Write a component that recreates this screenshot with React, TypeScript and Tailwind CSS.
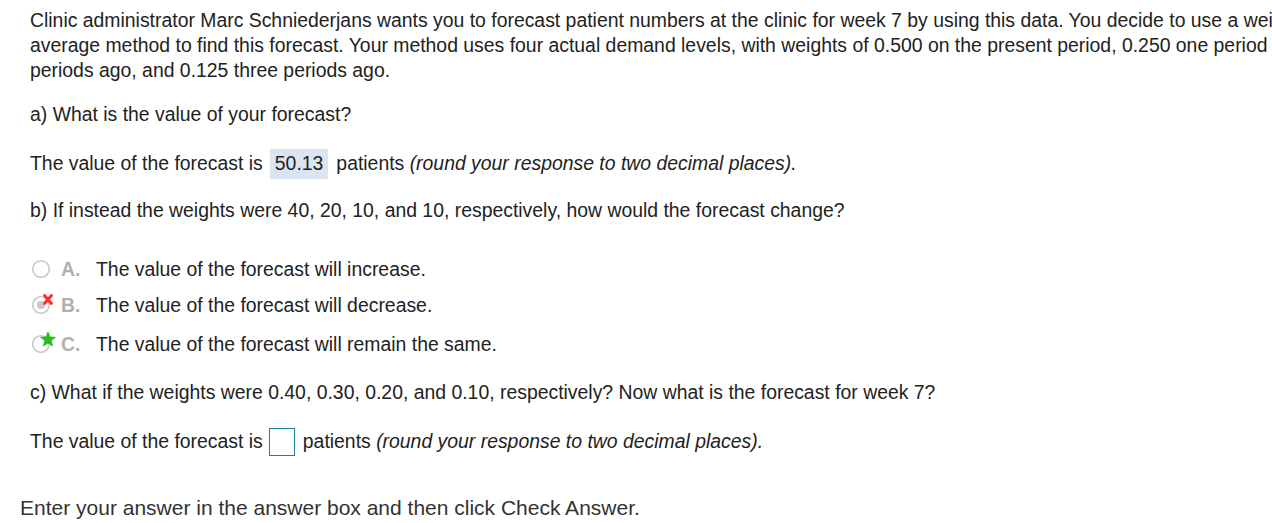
import React from "react";

const Radio = ({ mark }: { mark?: "x" | "star" }) => (
  <svg width="30" height="24" viewBox="0 0 30 24" className="shrink-0">
    <circle cx="11" cy="13" r="8.3" fill="#fff" stroke="#c8c8c8" strokeWidth="1.6" />
    {mark === "x" && (
      <>
        <circle cx="11" cy="13" r="4" fill="#c8c8c8" />
        <path d="M14.5 3.5 L21.5 11.5 M21.5 3.5 L14.5 11.5" stroke="#ff2a1a" strokeWidth="2.8" strokeLinecap="round" />
      </>
    )}
    {mark === "star" && (
      <path
        d="M18 1 L20 6 L25.4 6.3 L21.2 9.7 L22.6 15 L18 12.1 L13.4 15 L14.8 9.7 L10.6 6.3 L16 6 Z"
        fill="#1fc41f"
        stroke="#14a014"
        strokeWidth="0.6"
      />
    )}
  </svg>
);

const options = [
  { letter: "A.", text: "The value of the forecast will increase." },
  { letter: "B.", text: "The value of the forecast will decrease.", mark: "x" as const },
  { letter: "C.", text: "The value of the forecast will remain the same.", mark: "star" as const },
];

export default function App() {
  return (
    <main
      className="w-[1272px] h-[523px] overflow-hidden bg-white text-[#222] text-[19.4px]"
      style={{ fontFamily: '"Liberation Sans", Arial, sans-serif' }}
    >
      <div className="pl-[30px] pt-[8px] w-[1440px]">
        <p className="leading-[25px]">
          Clinic administrator Marc Schniederjans wants you to forecast patient numbers at the clinic for
          week 7 by using this data. You decide to use a weighted moving average method to find this
          forecast. Your method uses four actual demand levels, with weights of 0.500 on the present
          period, 0.250 one period ago, 0.125 two periods ago, and 0.125 three periods ago.
        </p>

        <p className="mt-[19px] leading-[25px]">a) What is the value of your forecast?</p>

        <div className="mt-[21px] flex items-center h-[32px]">
          <span>The value of the forecast is</span>
          <span className="ml-[7px] mr-[8px] bg-[#dbe5f1] px-[5px] h-[30px] flex items-center">50.13</span>
          <span>
            patients <i>(round your response to two decimal places).</i>
          </span>
        </div>

        <p className="mt-[18px] leading-[25px]">
          b) If instead the weights were 40, 20, 10, and 10, respectively, how would the forecast change?
        </p>

        <div className="mt-[34px] flex flex-col">
          {options.map((o, i) => (
            <div key={o.letter} className={`flex items-center h-[26px] ${i === 1 ? "mt-[10px]" : i === 2 ? "mt-[13px]" : ""}`}>
              <div className="w-[31px] mt-[-5px]">
                <Radio mark={o.mark} />
              </div>
              <span className="w-[35px] text-[#b0b0b0] font-bold">{o.letter}</span>
              <span>{o.text}</span>
            </div>
          ))}
        </div>

        <p className="mt-[22px] leading-[25px]">
          c) What if the weights were 0.40, 0.30, 0.20, and 0.10, respectively? Now what is the forecast
          for week 7?
        </p>

        <div className="mt-[22px] flex items-center h-[30px]">
          <span>The value of the forecast is</span>
          <input
            className="ml-[6px] mr-[8px] w-[26px] h-[28px] border border-[#1b7fa0] outline-none"
            aria-label="forecast"
          />
          <span>
            patients <i>(round your response to two decimal places).</i>
          </span>
        </div>
      </div>

      <p className="pl-[20px] mt-[36px] text-[21px] leading-[30px] text-[#333]">
        Enter your answer in the answer box and then click Check Answer.
      </p>
    </main>
  );
}
